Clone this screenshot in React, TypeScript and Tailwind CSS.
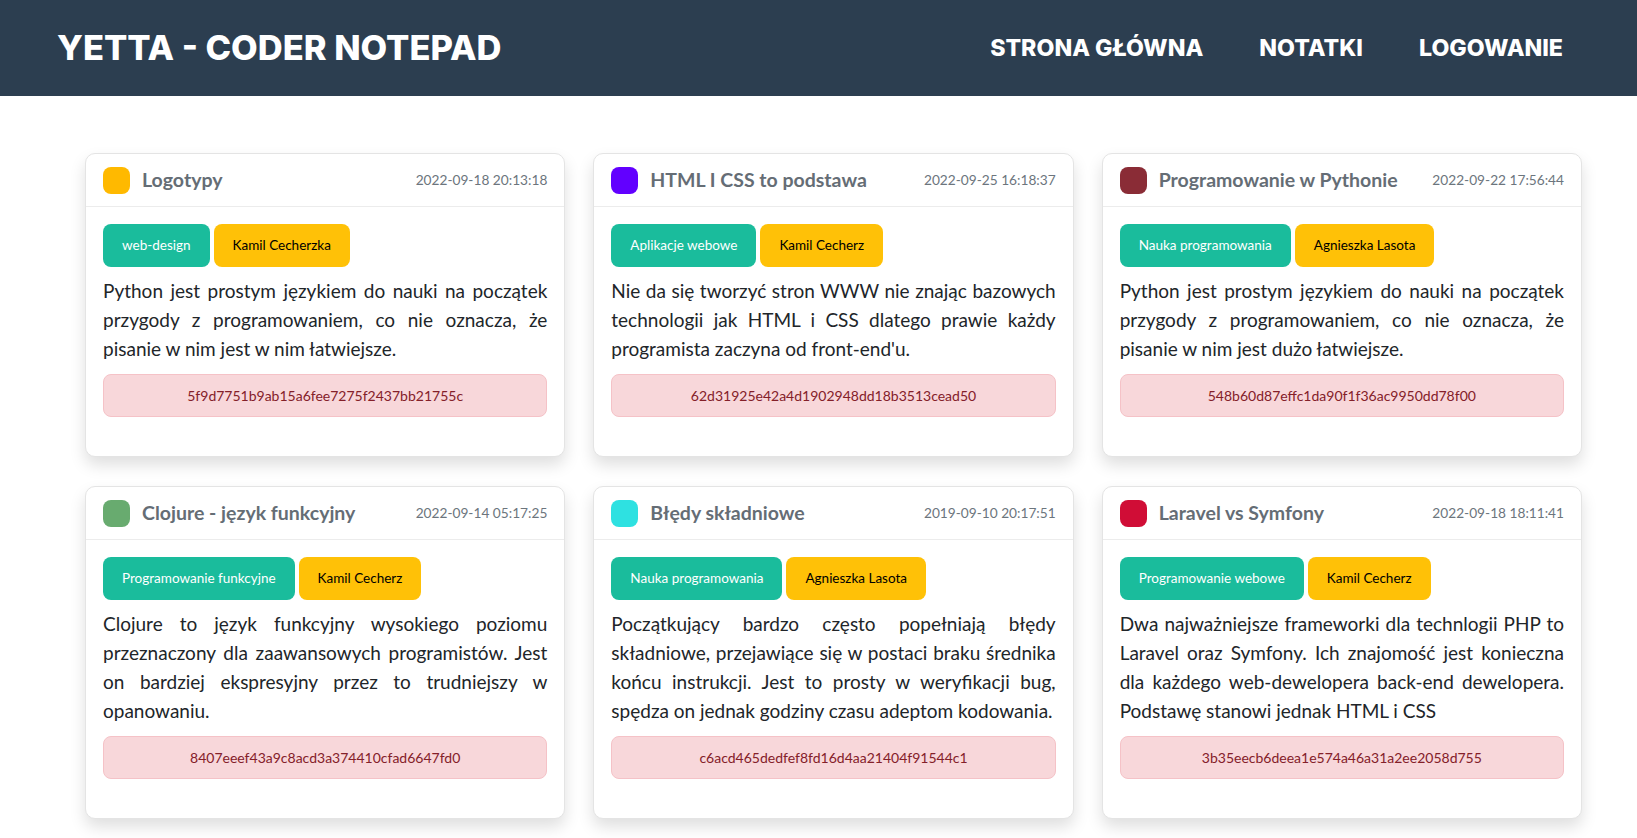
type Note = {
  title: string;
  date: string;
  color: string;
  tag: string;
  author: string;
  text: string;
  hash: string;
};

const notes: Note[] = [
  {
    title: "Logotypy",
    date: "2022-09-18 20:13:18",
    color: "bg-[#ffb900]",
    tag: "web-design",
    author: "Kamil Cecherzka",
    text: "Python jest prostym językiem do nauki na początek przygody z programowaniem, co nie oznacza, że pisanie w nim jest w nim łatwiejsze.",
    hash: "5f9d7751b9ab15a6fee7275f2437bb21755c",
  },
  {
    title: "HTML I CSS to podstawa",
    date: "2022-09-25 16:18:37",
    color: "bg-[#6200ff]",
    tag: "Aplikacje webowe",
    author: "Kamil Cecherz",
    text: "Nie da się tworzyć stron WWW nie znając bazowych technologii jak HTML i CSS dlatego prawie każdy programista zaczyna od front-end'u.",
    hash: "62d31925e42a4d1902948dd18b3513cead50",
  },
  {
    title: "Programowanie w Pythonie",
    date: "2022-09-22 17:56:44",
    color: "bg-[#8a2c36]",
    tag: "Nauka programowania",
    author: "Agnieszka Lasota",
    text: "Python jest prostym językiem do nauki na początek przygody z programowaniem, co nie oznacza, że pisanie w nim jest dużo łatwiejsze.",
    hash: "548b60d87effc1da90f1f36ac9950dd78f00",
  },
  {
    title: "Clojure - język funkcyjny",
    date: "2022-09-14 05:17:25",
    color: "bg-[#68ab6f]",
    tag: "Programowanie funkcyjne",
    author: "Kamil Cecherz",
    text: "Clojure to język funkcyjny wysokiego poziomu przeznaczony dla zaawansowych programistów. Jest on bardziej ekspresyjny przez to trudniejszy w opanowaniu.",
    hash: "8407eeef43a9c8acd3a374410cfad6647fd0",
  },
  {
    title: "Błędy składniowe",
    date: "2019-09-10 20:17:51",
    color: "bg-[#2ee1e1]",
    tag: "Nauka programowania",
    author: "Agnieszka Lasota",
    text: "Początkujący bardzo często popełniają błędy składniowe, przejawiące się w postaci braku średnika końcu instrukcji. Jest to prosty w weryfikacji bug, spędza on jednak godziny czasu adeptom kodowania.",
    hash: "c6acd465dedfef8fd16d4aa21404f91544c1",
  },
  {
    title: "Laravel vs Symfony",
    date: "2022-09-18 18:11:41",
    color: "bg-[#d00d36]",
    tag: "Programowanie webowe",
    author: "Kamil Cecherz",
    text: "Dwa najważniejsze frameworki dla technlogii PHP to Laravel oraz Symfony. Ich znajomość jest konieczna dla każdego web-dewelopera back-end dewelopera. Podstawę stanowi jednak HTML i CSS",
    hash: "3b35eecb6deea1e574a46a31a2ee2058d755",
  },
];

function NoteCard({ note }: { note: Note }) {
  return (
    <div className="bg-white rounded-[10px] border border-[#e4e4e4] shadow-[0_8px_16px_rgba(0,0,0,0.13)] flex flex-col">
      {/* nagłówek karty */}
      <div className="h-[53px] px-[17px] flex items-center border-b border-[#ececec]">
        <div className={`w-[27px] h-[27px] rounded-[8px] shrink-0 ${note.color}`} />
        <h3 className="ml-3 text-[19.5px] font-bold text-[#656d75] leading-none">{note.title}</h3>
        <span className="ml-auto text-[13.7px] text-[#6c757d]">{note.date}</span>
      </div>

      <div className="px-[17px] pt-[17px] pb-[39px]">
        <div className="flex gap-1">
          <span className="h-[43px] px-[19px] flex items-center rounded-[8px] bg-[#1abc9c] text-white text-[13.5px]">
            {note.tag}
          </span>
          <span className="h-[43px] px-[19px] flex items-center rounded-[8px] bg-[#ffc107] text-black text-[13.5px]">
            {note.author}
          </span>
        </div>
        <p className="mt-[9px] mb-[11px] text-[19px] leading-[29px] text-[#212529] text-justify">{note.text}</p>
        <div className="h-[43px] flex items-center justify-center rounded-[8px] bg-[#f8d7da] border border-[#f5c2c7] text-[#842029] text-[14px]">
          {note.hash}
        </div>
      </div>
    </div>
  );
}

export default function App() {
  return (
    <div className="min-h-screen bg-white font-['Lato',sans-serif]">
      <nav className="h-[96px] bg-[#2c3e50] pl-[57px] pr-[74px] flex items-center text-white font-['Inter',sans-serif]">
        <span className="text-[34.5px] font-extrabold">YETTA - CODER NOTEPAD</span>
        <div className="ml-auto flex gap-[56px] text-[23.2px] font-extrabold">
          <a>STRONA GŁÓWNA</a>
          <a>NOTATKI</a>
          <a>LOGOWANIE</a>
        </div>
      </nav>

      <main className="pt-[57px] pl-[85px] pr-[55px] pb-10">
        <div className="grid grid-cols-3 gap-x-[28px] gap-y-[29px]">
          {notes.map((n) => (
            <NoteCard key={n.hash} note={n} />
          ))}
        </div>
      </main>
    </div>
  );
}
